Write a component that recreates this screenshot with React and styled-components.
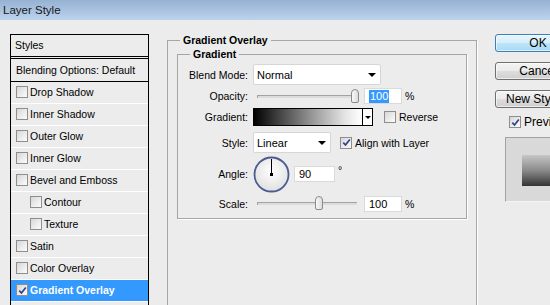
import React from "react";
import styled, { createGlobalStyle, css } from "styled-components";

const Global = createGlobalStyle`
  html, body { margin: 0; padding: 0; width: 550px; height: 305px; overflow: hidden; background: #ececec; }
  #root { width: 550px; height: 305px; }
`;

const Window = styled.div`
  width: 550px;
  height: 305px;
  background: #ececec;
  overflow: hidden;
  font-family: "Liberation Sans", Arial, sans-serif;
  font-size: 10.5px;
  color: #000;
`;

const TitleBar = styled.div`
  height: 20px;
  display: flex;
  align-items: center;
  padding-left: 3px;
  background: linear-gradient(to bottom, #97b1d2 0%, #abc4e2 55%, #bcd3ec 100%);
  font-size: 11.5px;
  color: #161616;
`;

const Body = styled.div`
  display: flex;
  align-items: flex-start;
  padding: 14px 0 0 10px;
`;

/* ---------- left styles list ---------- */
const StyleList = styled.div`
  width: 139px;
  height: 271px;
  flex-shrink: 0;
  box-sizing: border-box;
  border-left: 1px solid #000;
  border-right: 1px solid #000;
  overflow: hidden;
`;

const ListHeader = styled.div`
  height: 23px;
  box-sizing: border-box;
  border-top: 1px solid #000;
  border-bottom: 1px solid #000;
  padding: 0 0 1px 4px;
  display: flex;
  align-items: center;
`;

const ListBlending = styled.div`
  margin-top: 1px;
  height: 24px;
  box-sizing: border-box;
  border-top: 1px solid #000;
  border-bottom: 1px solid #000;
  padding: 0 0 1px 5px;
  display: flex;
  align-items: center;
`;

const ListRow = styled.div`
  height: 22px;
  box-sizing: border-box;
  border-bottom: 1px solid #fff;
  display: flex;
  align-items: center;
  padding: 0 0 1px ${(p) => (p.$indent ? 19 : 5)}px;
  ${(p) =>
    p.$selected &&
    css`
      background: #3399ff;
      color: #fff;
      font-weight: bold;
    `}
`;

const BoxMark = styled.span`
  width: 12px;
  height: 12px;
  box-sizing: border-box;
  border: 1px solid #8e8e8e;
  background: linear-gradient(135deg, #d6d6d6 0%, #eeeeee 60%, #fbfbfb 100%);
  display: inline-flex;
  align-items: center;
  justify-content: center;
  flex-shrink: 0;
  margin-right: ${(p) => p.$gap ?? 2}px;
  margin-left: ${(p) => p.$ml ?? 0}px;
`;

const Check = ({ checked, gap, ml }) => (
  <BoxMark $gap={gap} $ml={ml}>
    {checked && (
      <svg width="9" height="9" viewBox="0 0 9 9">
        <path d="M1.3 4.6 L3.5 7 L7.8 1.5" stroke="#2e4190" strokeWidth="1.7" fill="none" />
      </svg>
    )}
  </BoxMark>
);

/* ---------- main group boxes ---------- */
const OuterGroup = styled.fieldset`
  width: 310px;
  height: 300px;
  box-sizing: border-box;
  flex-shrink: 0;
  min-width: 0;
  margin: 0 18px;
  padding: 0 9px;
  border: 1px solid #a6a6a6;
  box-shadow: 1px 1px 0 #fff;
`;

const Legend = styled.legend`
  margin-left: ${(p) => p.$ml}px;
  padding: 0 3px;
  font-weight: bold;
  font-size: 10.5px;
  line-height: 12px;
`;

const InnerGroup = styled.fieldset`
  margin: 2px 0 0 0;
  padding: 0 0 6px 0;
  min-width: 0;
  border: 1px solid #a6a6a6;
  box-shadow: 1px 1px 0 #fff;
`;

const FormRow = styled.div`
  display: flex;
  align-items: center;
  height: ${(p) => p.$h}px;
  margin-top: ${(p) => p.$mt || 0}px;
`;

const Label = styled.span`
  width: 70px;
  margin-right: 5px;
  text-align: right;
  flex-shrink: 0;
`;

const Select = styled.div`
  width: ${(p) => p.$w}px;
  height: 21px;
  box-sizing: border-box;
  background: #fff;
  border: 1px solid #d6d6d6;
  border-radius: 2px;
  display: flex;
  align-items: center;
  justify-content: space-between;
  padding: 0 4px 0 3px;
  font-size: 11px;
`;

const Arrow = styled.span`
  width: 0;
  height: 0;
  border-left: 4px solid transparent;
  border-right: 4px solid transparent;
  border-top: 4px solid #000;
`;

const SliderWrap = styled.div`
  width: 107px;
  height: 16px;
  display: flex;
  align-items: center;
  flex-shrink: 0;
`;

const Track = styled.div`
  position: relative;
  width: 99px;
  height: 2px;
  margin-left: 4px;
  border-top: 1px solid #a3a3a3;
  border-left: 1px solid #a3a3a3;
  background: #dcdcdc;
`;

const Thumb = styled.div`
  position: absolute;
  top: -7px;
  width: 8px;
  height: 14px;
  box-sizing: border-box;
  border: 1px solid #8a8a8a;
  border-radius: 4px 4px 2px 2px;
  background: linear-gradient(to right, #f8f8f8, #dcdcdc);
`;

const NumInput = styled.div`
  width: ${(p) => p.$w}px;
  height: 16px;
  box-sizing: border-box;
  margin-left: ${(p) => p.$ml}px;
  background: #fff;
  border: 1px solid #dadada;
  display: flex;
  align-items: center;
  padding-left: 4px;
  font-size: 11px;
  flex-shrink: 0;
`;

const Selected = styled.span`
  background: #3399ff;
  color: #fff;
  padding: 0 1px;
  line-height: 13px;
`;

const Unit = styled.span`
  margin-left: 3px;
  margin-bottom: ${(p) => p.$raise || 0}px;
`;

const GradientBar = styled.div`
  width: 120px;
  height: 18px;
  box-sizing: border-box;
  border: 1px solid #000;
  display: flex;
  flex-shrink: 0;
`;

const Ramp = styled.div`
  flex: 1;
  background: linear-gradient(to right, #000 0%, #3a3a3a 20%, #9a9a9a 55%, #e6e6e6 85%, #fff 100%);
`;

const RampArrow = styled.div`
  width: 9px;
  border-left: 1px solid #000;
  background: #fff;
  display: flex;
  align-items: center;
  justify-content: center;
`;

const SmallArrow = styled.span`
  width: 0;
  height: 0;
  border-left: 3px solid transparent;
  border-right: 3px solid transparent;
  border-top: 3px solid #000;
`;

const Option = styled.span`
  white-space: nowrap;
`;

const Dial = () => (
  <svg width="37" height="37" viewBox="0 0 37 37" style={{ flexShrink: 0 }}>
    <defs>
      <radialGradient id="dialg" cx="50%" cy="40%" r="60%">
        <stop offset="0%" stopColor="#ffffff" />
        <stop offset="100%" stopColor="#e0e0e0" />
      </radialGradient>
    </defs>
    <circle cx="18.5" cy="18.5" r="17" fill="url(#dialg)" stroke="#4a5b8e" strokeWidth="1.8" />
    <line x1="18.5" y1="18.5" x2="18.5" y2="3" stroke="#000" strokeWidth="1" />
    <rect x="17" y="17" width="3" height="3" fill="#000" />
  </svg>
);

/* ---------- right column ---------- */
const RightCol = styled.div`
  width: 86px;
  flex-shrink: 0;
  display: flex;
  flex-direction: column;
`;

const Button = styled.div`
  height: 18px;
  box-sizing: border-box;
  margin-top: ${(p) => p.$mt || 0}px;
  border: 1px solid ${(p) => (p.$primary ? "#3c7fb1" : "#707070")};
  border-radius: 3px;
  background: ${(p) =>
    p.$primary
      ? "linear-gradient(to bottom, #e7f5fd 0%, #d5eefc 50%, #bde4f8 51%, #a9d9f3 100%)"
      : "linear-gradient(to bottom, #f3f3f3 0%, #ebebeb 50%, #dddddd 51%, #cfcfcf 100%)"};
  box-shadow: inset 0 0 0 1px rgba(255, 255, 255, 0.6);
  display: flex;
  align-items: center;
  justify-content: center;
  font-size: 12px;
  white-space: nowrap;
`;

const PreviewRow = styled.div`
  display: flex;
  align-items: center;
  height: 12px;
  margin: 8px 0 0 14px;
  font-size: 12px;
  white-space: nowrap;
`;

const PreviewBox = styled.div`
  width: 62px;
  height: 65px;
  box-sizing: border-box;
  margin: 9px 0 0 10px;
  background: #d9d9d9;
  border-top: 1px solid #a2a2a2;
  border-left: 1px solid #a2a2a2;
  border-bottom: 1px solid #f4f4f4;
  padding: 17px 0 0 16px;
`;

const PreviewSwatch = styled.div`
  width: 30px;
  height: 31px;
  background: linear-gradient(to bottom, #c6c6c6 0%, #8a8a8a 50%, #333 100%);
`;

const effects = [
  { label: "Drop Shadow" },
  { label: "Inner Shadow" },
  { label: "Outer Glow" },
  { label: "Inner Glow" },
  { label: "Bevel and Emboss" },
  { label: "Contour", indent: true },
  { label: "Texture", indent: true },
  { label: "Satin" },
  { label: "Color Overlay" },
  { label: "Gradient Overlay", checked: true, selected: true },
];

const Slider = ({ pos }) => (
  <SliderWrap>
    <Track>
      <Thumb style={{ left: pos }} />
    </Track>
  </SliderWrap>
);

export default function App() {
  return (
    <Window>
      <Global />
      <TitleBar>Layer Style</TitleBar>
      <Body>
        <StyleList>
          <ListHeader>Styles</ListHeader>
          <ListBlending>Blending Options: Default</ListBlending>
          {effects.map((e) => (
            <ListRow key={e.label} $indent={e.indent} $selected={e.selected}>
              <Check checked={e.checked} gap={2} />
              {e.label}
            </ListRow>
          ))}
          <ListRow />
        </StyleList>

        <OuterGroup>
          <Legend $ml={3}>Gradient Overlay</Legend>
          <InnerGroup>
            <Legend $ml={12}>Gradient</Legend>
            <FormRow $h={21} $mt={4}>
              <Label>Blend Mode:</Label>
              <Select $w={128}>
                Normal
                <Arrow />
              </Select>
            </FormRow>
            <FormRow $h={22}>
              <Label>Opacity:</Label>
              <Slider pos={93} />
              <NumInput $w={38} $ml={4}>
                <Selected>100</Selected>
              </NumInput>
              <Unit>%</Unit>
            </FormRow>
            <FormRow $h={20}>
              <Label>Gradient:</Label>
              <GradientBar>
                <Ramp />
                <RampArrow>
                  <SmallArrow />
                </RampArrow>
              </GradientBar>
              <Check ml={11} gap={3} />
              <Option>Reverse</Option>
            </FormRow>
            <FormRow $h={21} $mt={5}>
              <Label>Style:</Label>
              <Select $w={78}>
                Linear
                <Arrow />
              </Select>
              <Check checked ml={9} gap={3} />
              <Option>Align with Layer</Option>
            </FormRow>
            <FormRow $h={36} $mt={3}>
              <Label>Angle:</Label>
              <Dial />
              <NumInput $w={41} $ml={4}>
                90
              </NumInput>
              <Unit $raise={8}>°</Unit>
            </FormRow>
            <FormRow $h={17} $mt={3}>
              <Label>Scale:</Label>
              <Slider pos={57} />
              <NumInput $w={38} $ml={4}>
                100
              </NumInput>
              <Unit>%</Unit>
            </FormRow>
          </InnerGroup>
        </OuterGroup>

        <RightCol>
          <Button $primary>OK</Button>
          <Button $mt={10}>Cancel</Button>
          <Button $mt={10}>New Style...</Button>
          <PreviewRow>
            <Check checked gap={3} />
            Preview
          </PreviewRow>
          <PreviewBox>
            <PreviewSwatch />
          </PreviewBox>
        </RightCol>
      </Body>
    </Window>
  );
}
